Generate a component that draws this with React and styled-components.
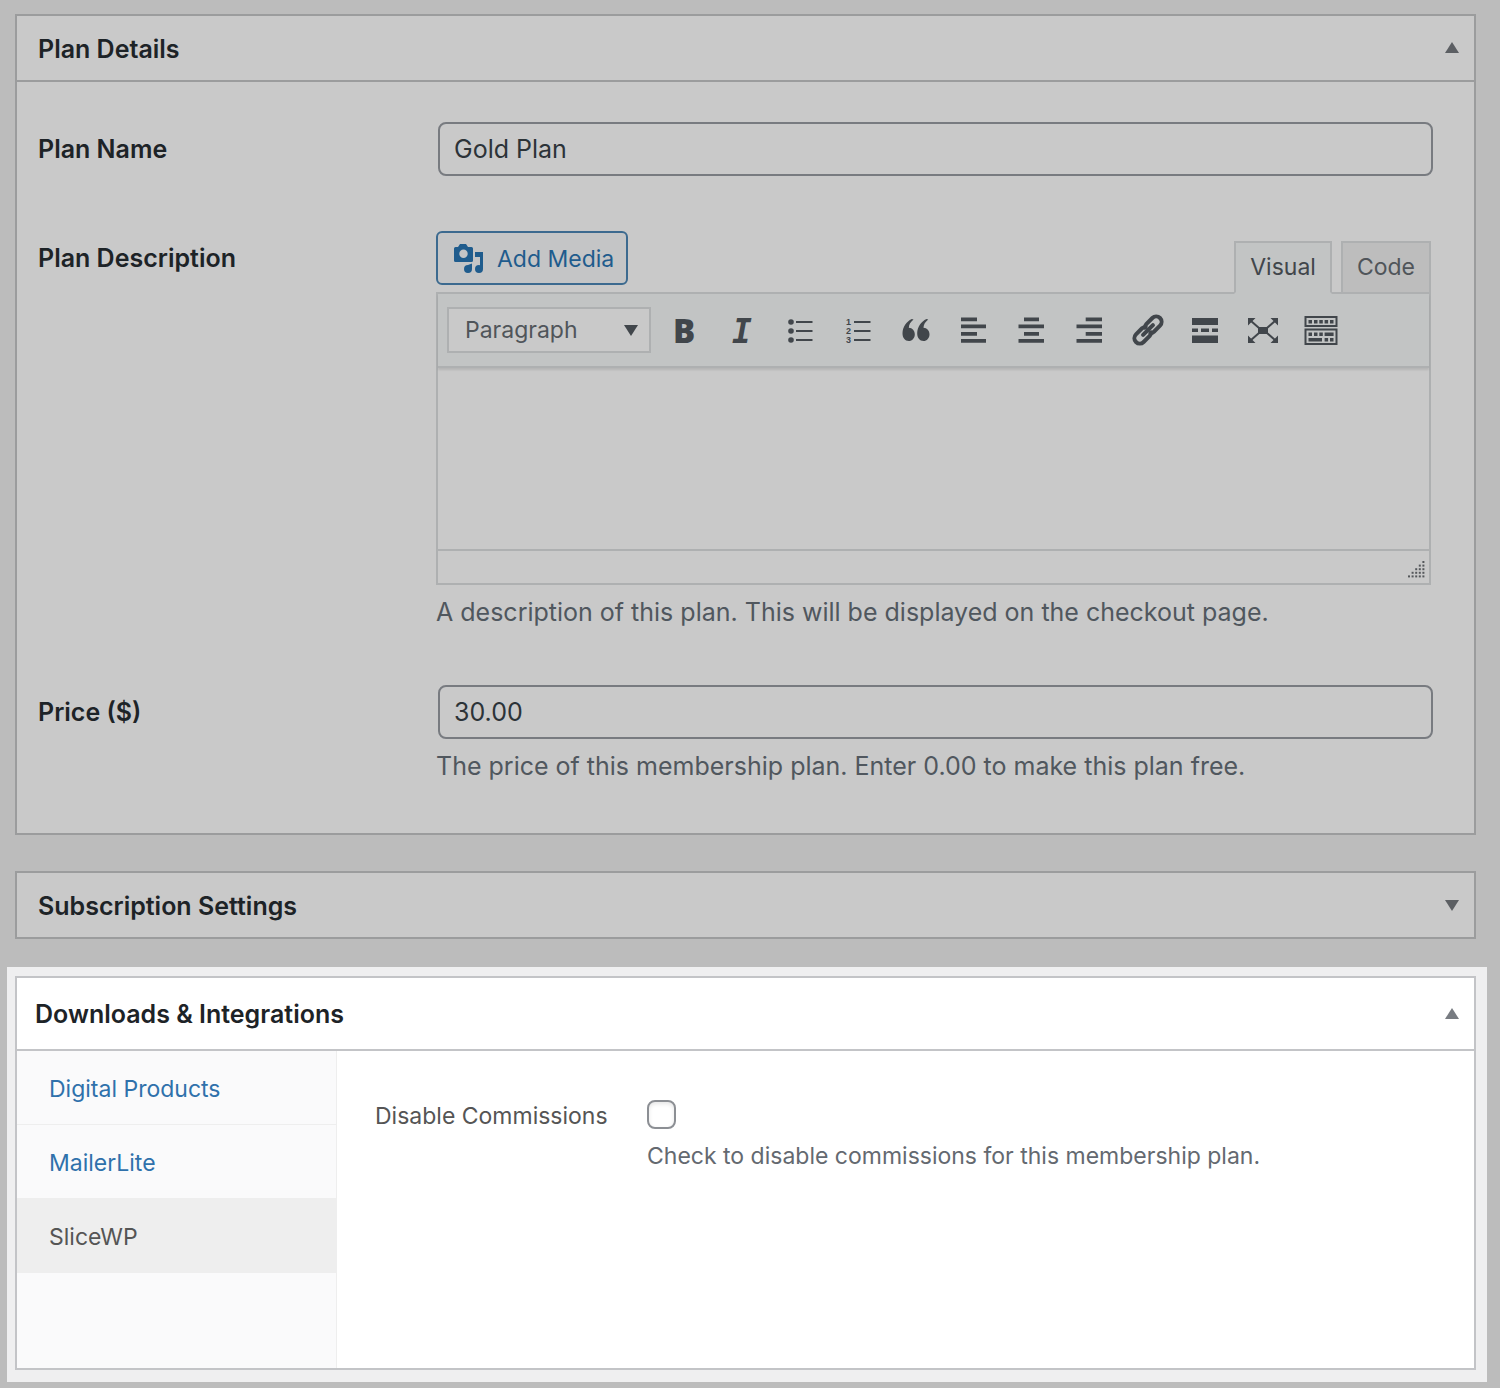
import React, {useState} from "react";
import styled, {createGlobalStyle, css} from "styled-components";

const GlobalStyle = createGlobalStyle`
    *, *::before, *::after {
        box-sizing: border-box;
    }
    body {
        margin: 0;
        background-color: #bcbcbc;
        font-family: Inter, "Liberation Sans", sans-serif;
        font-size: 25px;
        line-height: 32px;
        color: #1d2327;
    }
    button, input, select, textarea {
        font: inherit;
        margin: 0;
    }
`;

const Page = styled.main`
    padding: 14px 13px 6px 7px;
`;

const Panel = styled.section`
    margin: 0 11px ${({$gap = 0}) => $gap}px 8px;
    border: 2px solid ${({$lit}) => ($lit ? "#c3c4c7" : "#9b9c9d")};
    background-color: ${({$lit}) => ($lit ? "#ffffff" : "#c9c9c9")};
`;

const Highlight = styled.div`
    padding: 9px 0 12px;
    background-color: #efeff0;
`;

const PanelTitle = styled.h2`
    margin: 0;
    font-size: 25px;
    font-weight: 600;
`;

const PanelHeader = styled.header`
    display: flex;
    align-items: center;
    justify-content: space-between;
    height: ${({$tall}) => ($tall ? 71 : 64)}px;
    padding: 0 14px 0 ${({$tall}) => ($tall ? 18 : 21)}px;
    ${PanelTitle} {
        padding-top: ${({$tall}) => ($tall ? 0 : 2)}px;
    }
`;

const ToggleButton = styled.button`
    display: flex;
    padding: 0;
    border: 0;
    background: none;
    color: ${({$lit}) => ($lit ? "#787c82" : "#5c5f63")};
`;

const PlanBody = styled.div`
    display: flex;
    flex-direction: column;
    gap: 55px;
    padding: 40px 41px 49px 21px;
    border-top: 2px solid #9b9c9d;
`;

const FieldRow = styled.div`
    display: grid;
    grid-template-columns: 398px minmax(0, 1fr);
`;

const FieldLabel = styled.label`
    padding-top: 11px;
    font-weight: 600;
`;

const TextInput = styled.input`
    display: block;
    width: calc(100% - 2px);
    height: 54px;
    margin-left: 2px;
    padding: 0 14px;
    border: 2px solid #787b80;
    border-radius: 8px;
    background-color: #c9c9c9;
    color: #2c3338;
`;

const HelpText = styled.p`
    margin: 11px 0 0;
    padding-bottom: 2px;
    color: #50575e;
`;

const EditorTop = styled.div`
    display: flex;
    justify-content: space-between;
    align-items: flex-start;
    padding-right: 2px;
`;

const MediaButton = styled.button`
    display: flex;
    align-items: center;
    gap: 13px;
    height: 54px;
    padding: 2px 12px 0 14px;
    border: 2px solid #3c6a8f;
    border-radius: 6px;
    background-color: #c4c5c6;
    color: #1f5c8d;
    font-size: 23px;
`;

const Tabs = styled.div`
    display: flex;
    gap: 9px;
    padding-top: 10px;
`;

const Tab = styled.button`
    height: 53px;
    padding: 0 14px 2px;
    border: 2px solid #aeb0b1;
    background-color: #bdbdbd;
    color: #50555a;
    font-size: 23px;
    ${({$active}) => $active && css`
        position: relative;
        z-index: 1;
        border-bottom-color: #c2c4c4;
        background-color: #c2c4c4;
        color: #41464b;
    `}
`;

const Editor = styled.div`
    margin: -2px 2px 0 0;
    border: 2px solid #aeb0b1;
`;

const Toolbar = styled.div`
    display: flex;
    align-items: center;
    height: 74px;
    padding-left: 9px;
    border-bottom: 2px solid #aeb0b1;
    background-color: #c2c4c4;
    box-shadow: 0 2px 2px rgba(0, 0, 0, .1);
`;

const SelectBox = styled.div`
    display: grid;
    align-items: center;
    margin-right: 3px;
    color: #41464b;
    > * {
        grid-area: 1 / 1;
    }
    svg {
        justify-self: end;
        margin-right: 12px;
        pointer-events: none;
    }
`;

const FormatSelect = styled.select`
    appearance: none;
    width: 204px;
    height: 46px;
    padding: 0 16px;
    border: 2px solid #aeb0b1;
    border-radius: 0;
    background-color: #c9c9c9;
    color: #50555a;
    font-size: 23px;
`;

const ToolButton = styled.button`
    display: flex;
    justify-content: center;
    width: 58px;
    padding: 0;
    border: 0;
    background: none;
    color: #41464b;
    svg {
        overflow: visible;
    }
`;

const EditorArea = styled.textarea`
    display: block;
    width: 100%;
    height: 181px;
    padding: 16px;
    border: 0;
    outline: 0;
    resize: none;
    background-color: transparent;
    color: #2c3338;
`;

const StatusBar = styled.div`
    display: flex;
    justify-content: flex-end;
    align-items: center;
    height: 34px;
    padding: 6px 3px 0 0;
    border-top: 2px solid #aeb0b1;
    color: #55585b;
`;

const IntegrationBody = styled.div`
    display: grid;
    grid-template-columns: 320px minmax(0, 1fr);
    min-height: 319px;
    border-top: 2px solid #c3c4c7;
    font-size: 23px;
`;

const SideNav = styled.nav`
    border-right: 1px solid #eeeeee;
    background-color: #fafafb;
`;

const SideLink = styled.a`
    display: block;
    padding: 22px 32px 19px;
    border-bottom: 1px solid #eeeeee;
    background-color: ${({$active}) => ($active ? "#eeeeee" : "transparent")};
    color: ${({$active}) => ($active ? "#555555" : "#2f71ab")};
    text-decoration: none;
`;

const Option = styled.div`
    display: grid;
    grid-template-columns: 272px minmax(0, 1fr);
    align-content: start;
    padding: 49px 38px;
    color: #555555;
`;

const Checkbox = styled.input`
    appearance: none;
    display: block;
    width: 29px;
    height: 29px;
    border: 2px solid #8c8f94;
    border-radius: 8px;
    background-color: #ffffff;
    box-shadow: inset 0 2px 4px rgba(0, 0, 0, .1);
    &:checked {
        background-color: #2271b1;
    }
`;

const OptionHelp = styled.p`
    margin: 11px 0 0;
    color: #646970;
`;

const Triangle = ({down}) => (
    <svg width="16" height="12" viewBox="0 0 16 12" fill="currentColor" aria-hidden="true">
        <path d={down ? "M1 1h14L8 12z" : "M8 0l7 11H1z"} />
    </svg>
);

const MediaIcon = () => (
    <svg width="32" height="32" viewBox="0 0 32 32" fill="currentColor" aria-hidden="true">
        <path fillRule="evenodd" d="M3.500 4H6l2-3h6l2 3h3.500a1.500 1.500 0 0 1 1.500 1.500v12a1.500 1.500 0 0 1-1.500 1.500H3.500a1.500 1.500 0 0 1-1.500-1.500v-12A1.500 1.500 0 0 1 3.500 4zM11.500 6.500a4.200 4.200 0 1 0 0 8.400 4.200 4.200 0 0 0 0-8.400z" />
        <path d="M23 9h8v17a4 4 0 1 1-4-4l1 .2V14h-5z" />
        <path d="M20 20.500V26a4 4 0 1 1-4-4z" />
    </svg>
);

const ToolIcon = ({children}) => (
    <svg width="40" height="40" viewBox="0 0 40 40" fill="currentColor" aria-hidden="true">
        {children}
    </svg>
);

const quote = "M17.500 9.500c-3 2.500-4.600 5-4.700 8.200 3.600.2 6 2.900 6 6.500 0 3.900-2.600 6.800-6 6.800-3.800 0-6.300-3.100-6.300-7.700 0-6.300 3.900-11.600 9.300-14.200z";

const tools = [
    {name: "Bold", icon: <text x="21" y="33" fontFamily="Open Sans" fontSize="33" fontWeight="800" textAnchor="middle">B</text>},
    {name: "Italic", icon: <text x="21" y="33" fontFamily="DejaVu Sans Mono" fontSize="33" fontWeight="700" fontStyle="italic" textAnchor="middle">I</text>},
    {
        name: "Bulleted list",
        icon: (
            <>
                <circle cx="12" cy="12" r="2.800" />
                <circle cx="12" cy="21" r="2.800" />
                <circle cx="12" cy="30" r="2.800" />
                <path d="M17 11h16.500v2H17zM17 20h16.500v2H17zM17 29h16.500v2H17z" />
            </>
        ),
    },
    {
        name: "Numbered list",
        icon: (
            <>
                <g fontFamily="Liberation Sans" fontSize="9" fontWeight="700">
                    <text x="9" y="15">1</text>
                    <text x="9" y="24">2</text>
                    <text x="9" y="33">3</text>
                </g>
                <path d="M17 11h16.500v2H17zM17 20h16.500v2H17zM17 29h16.500v2H17z" />
            </>
        ),
    },
    {
        name: "Blockquote",
        icon: (
            <g transform="translate(1 0)">
                <path d={quote} />
                <path d={quote} transform="translate(14.700 0)" />
            </g>
        ),
    },
    {name: "Align left", icon: <path d="M8 7.500h16v3.700H8zM8 14.500h25v3.700H8zM8 22h16v3.700H8zM8 29h25v3.700H8z" />},
    {name: "Align center", icon: <path d="M13 7.500h15v3.700H13zM7.500 14.500H33v3.700H7.500zM13 22h15v3.700H13zM7.500 29H33v3.700H7.500z" />},
    {name: "Align right", icon: <path d="M16.700 7.500H33v3.700H16.700zM7.500 14.500H33v3.700H7.500zM16.700 22H33v3.700H16.700zM7.500 29H33v3.700H7.500z" />},
    {
        name: "Insert link",
        icon: (
            <g transform="translate(21 20) rotate(-45)" fill="none" stroke="currentColor" strokeWidth="4" strokeLinecap="round">
                <path d="M0.500 -3.800A5.400 5.400 0 0 0 -3 -5.400H-11.600A5.400 5.400 0 0 0 -11.600 5.400H-3A5.400 5.400 0 0 0 0.500 3.800" />
                <path d="M-0.500 -3.800A5.400 5.400 0 0 1 3 -5.400H11.600A5.400 5.400 0 0 1 11.600 5.400H3A5.400 5.400 0 0 1 -0.500 3.800" />
                <path d="M-7 0H7" />
            </g>
        ),
    },
    {name: "Insert read more tag", icon: <path d="M7 8h26v7H7zM7 18.500h6v3.500H7zM16 18.500h8v3.500h-8zM27 18.500h6v3.500h-6zM7 25.500h26V33H7z" />},
    {
        name: "Fullscreen",
        icon: (
            <>
                <path d="M15 17h10v7H15zM5 8h7.500L5 15.500zM35 8v7.500L27.500 8zM5 33v-7.500l7.500 7.500zM35 33h-7.500l7.500-7.500z" />
                <path d="M8 11l8 7M32 11l-8 7M8 30l8-7M32 30l-8-7" fill="none" stroke="currentColor" strokeWidth="2" />
            </>
        ),
    },
    {
        name: "Toolbar toggle",
        icon: (
            <>
                <path fillRule="evenodd" d="M3.500 6h33v11h-33zM5.500 8v7h29V8zM3.500 18.500h33V35h-33zM5.500 20.500V33h29V20.500z" />
                <path d="M7.500 10h3.500v3.500H7.500zM13 10h3.500v3.500H13zM18.300 10h3.500v3.500h-3.500zM23.600 10h3.500v3.500h-3.500zM29 10h3.500v3.500H29zM7.500 22.500h3.500v3.500H7.500zM13 22.500h3.500v3.500H13zM18.300 22.500h3.500v3.500h-3.500zM23.600 22.500h9v3.500h-9zM7.500 28H21v3.500H7.500zM23.600 28h3.500v3.500h-3.500zM29 28h3.500v3.500H29z" />
            </>
        ),
    },
];

const gripDots = [0, 1, 2, 3, 4].flatMap((col) => [0, 1, 2, 3, 4].filter((row) => row >= 4 - col).map((row) => [col, row]));

const ResizeGrip = () => (
    <svg width="18" height="18" viewBox="0 0 18 18" fill="currentColor" aria-hidden="true">
        {gripDots.map(([col, row]) => (
            <rect key={`${col}-${row}`} x={col * 3.6} y={row * 3.6} width="2" height="2" />
        ))}
    </svg>
);

const PlanDetails = () => {
    const [mode, setMode] = useState("Visual");
    return (
        <Panel $gap={36}>
            <PanelHeader>
                <PanelTitle>Plan Details</PanelTitle>
                <ToggleButton aria-label="Collapse Plan Details"><Triangle /></ToggleButton>
            </PanelHeader>
            <PlanBody>
                <FieldRow>
                    <FieldLabel htmlFor="plan-name">Plan Name</FieldLabel>
                    <TextInput id="plan-name" defaultValue="Gold Plan" />
                </FieldRow>
                <FieldRow>
                    <FieldLabel htmlFor="plan-description">Plan Description</FieldLabel>
                    <div>
                        <EditorTop>
                            <MediaButton><MediaIcon />Add Media</MediaButton>
                            <Tabs>
                                {["Visual", "Code"].map((name) => (
                                    <Tab key={name} $active={mode === name} onClick={() => setMode(name)}>{name}</Tab>
                                ))}
                            </Tabs>
                        </EditorTop>
                        <Editor>
                            <Toolbar>
                                <SelectBox>
                                    <FormatSelect aria-label="Text format">
                                        <option>Paragraph</option>
                                        <option>Heading 1</option>
                                        <option>Heading 2</option>
                                    </FormatSelect>
                                    <Triangle down />
                                </SelectBox>
                                {tools.map(({name, icon}) => (
                                    <ToolButton key={name} aria-label={name}><ToolIcon>{icon}</ToolIcon></ToolButton>
                                ))}
                            </Toolbar>
                            <EditorArea id="plan-description" />
                            <StatusBar><ResizeGrip /></StatusBar>
                        </Editor>
                        <HelpText>A description of this plan. This will be displayed on the checkout page.</HelpText>
                    </div>
                </FieldRow>
                <FieldRow>
                    <FieldLabel htmlFor="plan-price">Price ($)</FieldLabel>
                    <div>
                        <TextInput id="plan-price" defaultValue="30.00" />
                        <HelpText>The price of this membership plan. Enter 0.00 to make this plan free.</HelpText>
                    </div>
                </FieldRow>
            </PlanBody>
        </Panel>
    );
};

const Integrations = () => (
    <Highlight>
        <Panel $lit>
            <PanelHeader $tall>
                <PanelTitle>Downloads &amp; Integrations</PanelTitle>
                <ToggleButton $lit aria-label="Collapse Downloads &amp; Integrations"><Triangle /></ToggleButton>
            </PanelHeader>
            <IntegrationBody>
                <SideNav>
                    <SideLink href="#digital-products">Digital Products</SideLink>
                    <SideLink href="#mailerlite">MailerLite</SideLink>
                    <SideLink href="#slicewp" $active>SliceWP</SideLink>
                </SideNav>
                <Option>
                    <label htmlFor="disable-commissions">Disable Commissions</label>
                    <div>
                        <Checkbox type="checkbox" id="disable-commissions" />
                        <OptionHelp>Check to disable commissions for this membership plan.</OptionHelp>
                    </div>
                </Option>
            </IntegrationBody>
        </Panel>
    </Highlight>
);

const App = () => (
    <>
        <GlobalStyle />
        <Page>
            <PlanDetails />
            <Panel $gap={28}>
                <PanelHeader>
                    <PanelTitle>Subscription Settings</PanelTitle>
                    <ToggleButton aria-label="Expand Subscription Settings"><Triangle down /></ToggleButton>
                </PanelHeader>
            </Panel>
            <Integrations />
        </Page>
    </>
);

export default App;
